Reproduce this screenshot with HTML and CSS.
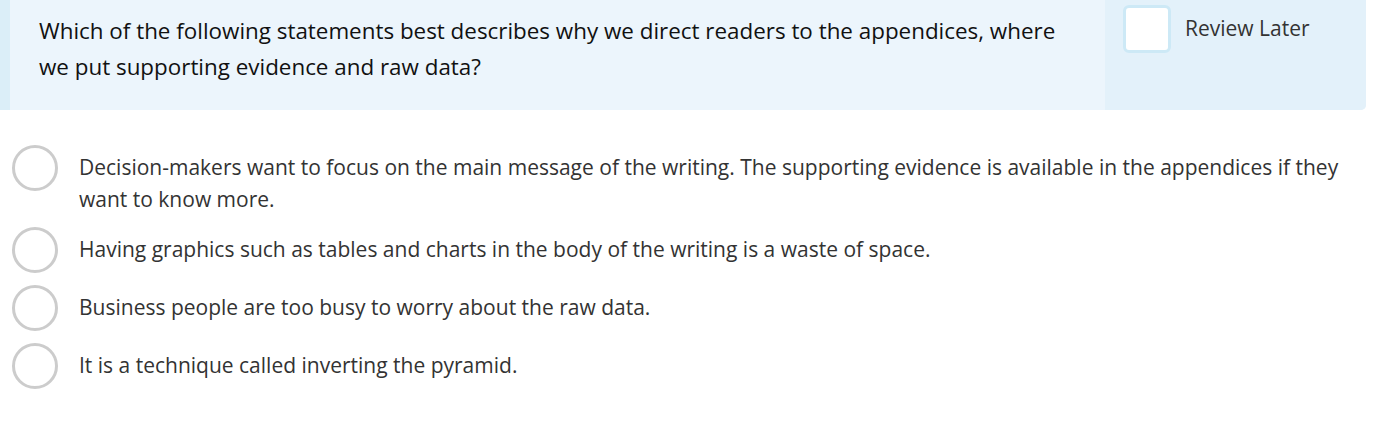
FILE: index.html
```html
<!DOCTYPE html>
<html>
<head>
<meta charset="utf-8">
<link rel="stylesheet" href="styles.css">
</head>
<body>
<div class="page">
  <div class="question-header">
    <div class="question-text">Which of the following statements best describes why we direct readers to the appendices, where we put supporting evidence and raw data?</div>
    <div class="review-panel">
      <span class="review-box"></span>
      <span class="review-label">Review Later</span>
    </div>
  </div>
  <div class="options">
    <div class="option">
      <span class="radio"></span>
      <span class="option-text">Decision-makers want to focus on the main message of the writing. The supporting evidence is available in the appendices if they want to know more.</span>
    </div>
    <div class="option">
      <span class="radio"></span>
      <span class="option-text">Having graphics such as tables and charts in the body of the writing is a waste of space.</span>
    </div>
    <div class="option">
      <span class="radio"></span>
      <span class="option-text">Business people are too busy to worry about the raw data.</span>
    </div>
    <div class="option">
      <span class="radio"></span>
      <span class="option-text">It is a technique called inverting the pyramid.</span>
    </div>
  </div>
</div>
</body>
</html>
```
FILE: styles.css
```css
html, body {
  margin: 0;
  padding: 0;
  background: #ffffff;
}
body {
  font-family: "Open Sans", "Liberation Sans", sans-serif;
  width: 1380px;
  height: 445px;
  overflow: hidden;
}
.page {
  width: 1366px;
}
.question-header {
  display: flex;
  height: 110px;
  background: #ecf5fc;
  border-left: 10px solid #dbeef8;
  border-bottom-right-radius: 5px;
  box-sizing: border-box;
}
.question-text {
  flex: 1;
  padding: 13px 32px 0 29px;
  font-size: 22.4px;
  line-height: 36px;
  color: #111111;
}
.review-panel {
  width: 261px;
  flex: none;
  background: #e3f1fa;
  border-bottom-right-radius: 5px;
  display: flex;
  align-items: flex-start;
  padding: 5px 0 0 18px;
  box-sizing: border-box;
}
.review-box {
  width: 48px;
  height: 48px;
  box-sizing: border-box;
  background: #ffffff;
  border: 3px solid #cde9f6;
  border-radius: 6px;
  flex: none;
}
.review-label {
  margin-left: 14px;
  margin-top: 10px;
  font-size: 21px;
  line-height: 27px;
  color: #333333;
}
.options {
  display: flex;
  flex-direction: column;
  gap: 12px;
  padding-top: 35px;
  padding-left: 12px;
}
.option {
  display: flex;
  align-items: flex-start;
}
.radio {
  width: 46px;
  height: 46px;
  box-sizing: border-box;
  border: 3px solid #cccccc;
  border-radius: 50%;
  background: #ffffff;
  flex: none;
}
.option-text {
  margin-left: 21px;
  padding-top: 6px;
  font-size: 21px;
  line-height: 32px;
  color: #333333;
  max-width: 1298px;
}
```
